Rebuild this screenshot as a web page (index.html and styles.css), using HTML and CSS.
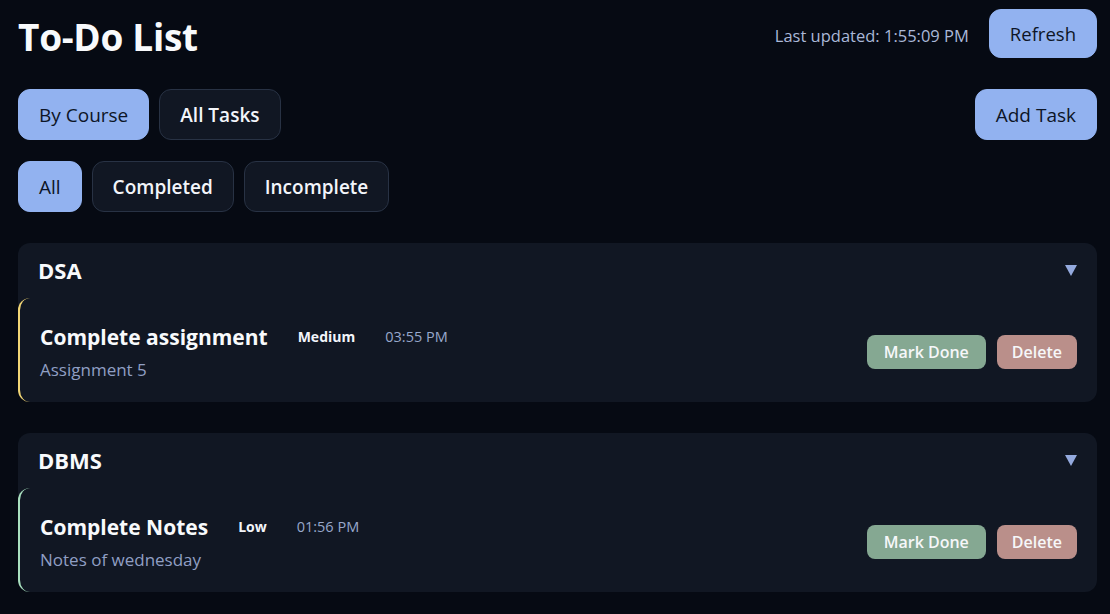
FILE: index.html
```html
<!DOCTYPE html>
<html lang="en">
<head>
<meta charset="utf-8">
<title>To-Do List</title>
<link rel="stylesheet" href="styles.css">
</head>
<body>
<div class="page">
  <header class="top">
    <h1 class="title">To-Do List</h1>
    <div class="top-right">
      <span class="updated">Last updated: 1:55:09 PM</span>
      <button class="btn btn-active btn-refresh">Refresh</button>
    </div>
  </header>

  <div class="row row-views">
    <div class="group">
      <button class="btn btn-active">By Course</button>
      <button class="btn">All Tasks</button>
    </div>
    <button class="btn btn-active">Add Task</button>
  </div>

  <div class="row row-filters">
    <div class="group">
      <button class="btn btn-active">All</button>
      <button class="btn">Completed</button>
      <button class="btn">Incomplete</button>
    </div>
  </div>

  <section class="course">
    <div class="course-head">
      <span class="course-name">DSA</span>
      <span class="caret"></span>
    </div>
    <div class="task task-medium">
      <div class="task-info">
        <div class="task-line">
          <span class="task-title">Complete assignment</span>
          <span class="prio">Medium</span>
          <span class="time">03:55 PM</span>
        </div>
        <div class="task-desc">Assignment 5</div>
      </div>
      <div class="actions">
        <button class="act act-done">Mark Done</button>
        <button class="act act-del">Delete</button>
      </div>
    </div>
  </section>

  <section class="course">
    <div class="course-head">
      <span class="course-name">DBMS</span>
      <span class="caret"></span>
    </div>
    <div class="task task-low">
      <div class="task-info">
        <div class="task-line">
          <span class="task-title">Complete Notes</span>
          <span class="prio">Low</span>
          <span class="time">01:56 PM</span>
        </div>
        <div class="task-desc">Notes of wednesday</div>
      </div>
      <div class="actions">
        <button class="act act-done">Mark Done</button>
        <button class="act act-del">Delete</button>
      </div>
    </div>
  </section>
</div>
</body>
</html>
```

FILE: styles.css
```css
* { box-sizing: border-box; }
html, body {
  margin: 0;
  padding: 0;
  background: #060a13;
  color: #f3f5fa;
  font-family: "Open Sans", "Noto Sans", sans-serif;
}
button { font-family: inherit; cursor: pointer; }

.page {
  padding: 9px 13px 0 18px;
  display: flex;
  flex-direction: column;
}

.top {
  display: flex;
  justify-content: space-between;
  align-items: center;
  height: 49px;
}
.title {
  margin: 0;
  font-size: 37px;
  font-weight: 700;
  line-height: 1;
  margin-top: 5px;
  color: #f8fafc;
  letter-spacing: -0.3px;
}
.top-right {
  display: flex;
  align-items: center;
  gap: 20px;
}
.updated {
  font-size: 16.5px;
  color: #aab8d8;
  margin-top: 3px;
}

.btn {
  height: 51px;
  padding: 0 20px;
  border-radius: 12px;
  border: 1px solid #283244;
  background: #111723;
  color: #f3f5fa;
  font-size: 19px;
  font-weight: 600;
}
.btn-active {
  background: #92b2f0;
  border-color: #92b2f0;
  color: #0d1526;
  font-weight: 500;
}
.btn-refresh { height: 49px; font-size: 18.5px; }

.row {
  display: flex;
  justify-content: space-between;
  align-items: center;
}
.row-views { margin-top: 31px; }
.row-filters { margin-top: 21px; }
.group { display: flex; gap: 10px; }

.course {
  margin-top: 31px;
  background: #111723;
  border-radius: 12px;
}
.course-head {
  display: flex;
  justify-content: space-between;
  align-items: center;
  padding: 12px 20px 13px 20px;
  height: 55px;
}
.course-name {
  font-size: 22px;
  font-weight: 700;
  color: #f8fafc;
}
.caret {
  width: 0;
  height: 0;
  border-left: 6px solid transparent;
  border-right: 6px solid transparent;
  border-top: 11px solid #94aade;
  margin-right: 0;
}

.task {
  display: flex;
  justify-content: space-between;
  align-items: center;
  border-left: 2px solid #f2d675;
  border-radius: 12px;
  padding: 20px 20px 17px 20px;
  height: 104px;
}
.task-low { border-left-color: #a9e0bf; }
.task-info { display: flex; flex-direction: column; gap: 7px; }
.task-line {
  display: flex;
  align-items: center;
  gap: 30px;
}
.task-title {
  font-size: 21px;
  font-weight: 700;
  color: #f8fafc;
}
.prio {
  font-size: 14px;
  font-weight: 700;
  color: #f3f5fa;
}
.time {
  font-size: 14.5px;
  color: #98a8cc;
}
.task-desc {
  font-size: 17px;
  color: #909fc4;
}

.actions { display: flex; gap: 11px; }
.act {
  height: 34px;
  padding: 0 16px;
  border: none;
  border-radius: 8px;
  font-size: 16px;
  font-weight: 600;
  color: #f6f7f9;
}
.act-done { background: #85a892; padding: 0 17px; }
.act-del { background: #ba8f8a; padding: 0 15px; }
```
